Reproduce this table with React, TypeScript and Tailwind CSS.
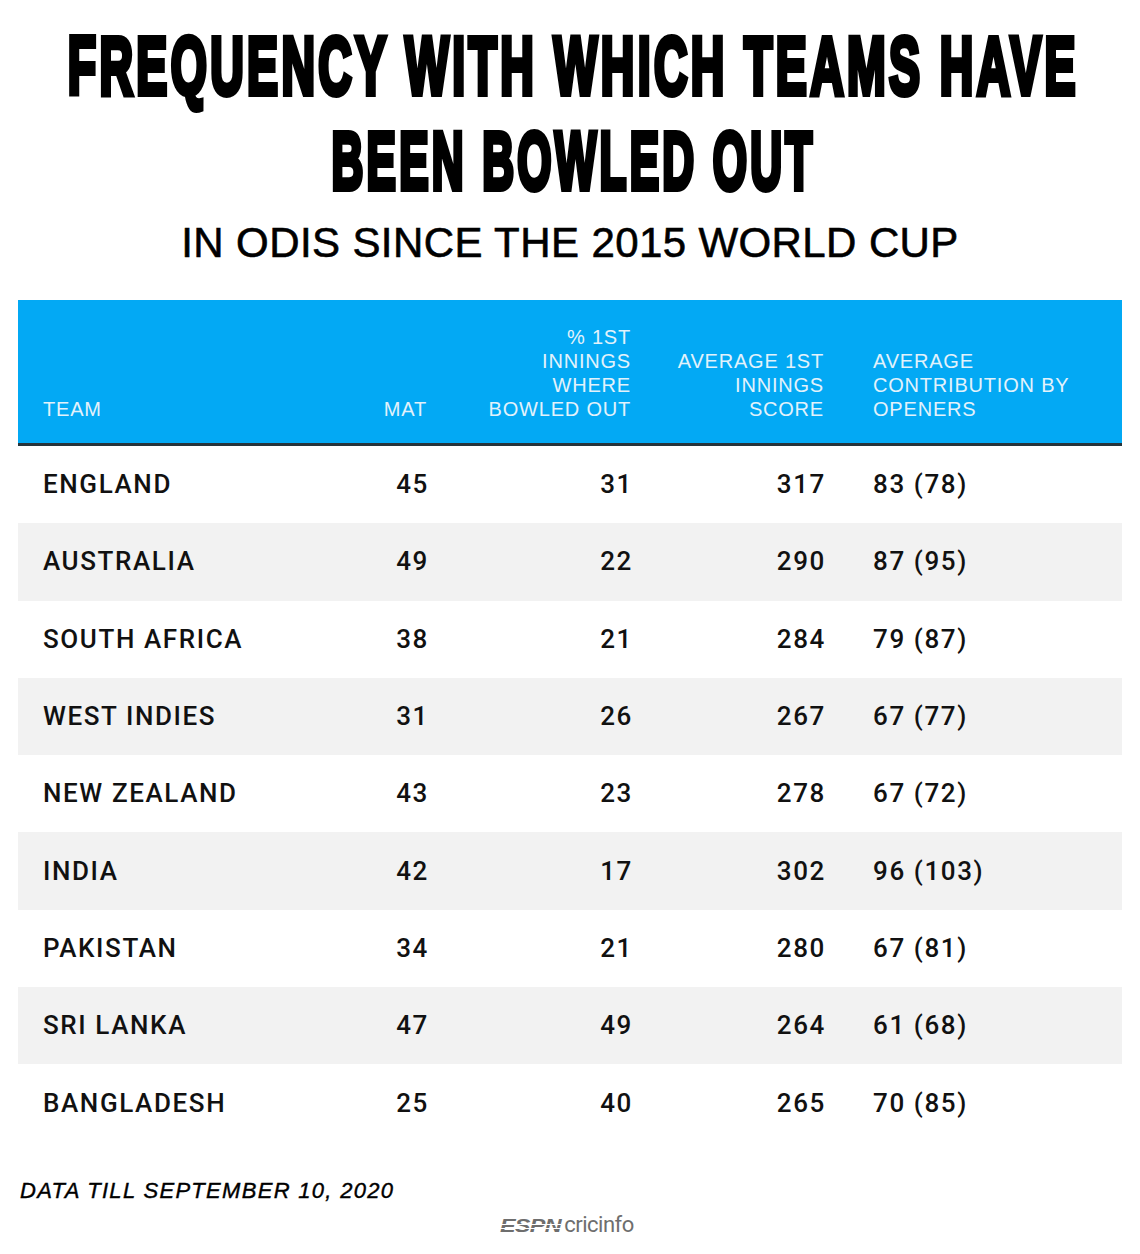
const rows = [
  { team: "ENGLAND", mat: 45, pct: 31, avg: 317, open: "83 (78)" },
  { team: "AUSTRALIA", mat: 49, pct: 22, avg: 290, open: "87 (95)" },
  { team: "SOUTH AFRICA", mat: 38, pct: 21, avg: 284, open: "79 (87)" },
  { team: "WEST INDIES", mat: 31, pct: 26, avg: 267, open: "67 (77)" },
  { team: "NEW ZEALAND", mat: 43, pct: 23, avg: 278, open: "67 (72)" },
  { team: "INDIA", mat: 42, pct: 17, avg: 302, open: "96 (103)" },
  { team: "PAKISTAN", mat: 34, pct: 21, avg: 280, open: "67 (81)" },
  { team: "SRI LANKA", mat: 47, pct: 49, avg: 264, open: "61 (68)" },
  { team: "BANGLADESH", mat: 25, pct: 40, avg: 265, open: "70 (85)" },
];

const cols = "grid grid-cols-[300px_84px_204px_193px_1fr] pl-[25px]";

function Title() {
  return (
    <div className="flex flex-col items-center overflow-hidden pt-[18px] font-['Liberation_Sans',Arial,sans-serif] text-[82px] font-bold leading-[95px] tracking-[6px] text-black [-webkit-text-stroke:6px_#000]">
      <div className="flex w-full justify-center">
        <span className="-mr-[6px] inline-block shrink-0 whitespace-nowrap scale-x-[0.566]">
          FREQUENCY WITH WHICH TEAMS HAVE
        </span>
      </div>
      <div className="flex w-full justify-center">
        <span className="-mr-[6px] inline-block shrink-0 whitespace-nowrap scale-x-[0.537]">
          BEEN BOWLED OUT
        </span>
      </div>
    </div>
  );
}

function Header() {
  return (
    <div
      className={`${cols} items-end border-b-[3px] border-[#27343b] bg-[#03a9f4] pb-[22px] pt-[25px] font-['Liberation_Sans',Arial,sans-serif] text-[20px] leading-[24px] tracking-[0.8px] text-[#e2f2fb]`}
    >
      <div>TEAM</div>
      <div className="text-right">MAT</div>
      <div className="whitespace-nowrap text-right">
        % 1ST
        <br />
        INNINGS
        <br />
        WHERE
        <br />
        BOWLED OUT
      </div>
      <div className="whitespace-nowrap text-right">
        AVERAGE 1ST
        <br />
        INNINGS
        <br />
        SCORE
      </div>
      <div className="whitespace-nowrap pl-[49px]">
        AVERAGE
        <br />
        CONTRIBUTION BY
        <br />
        OPENERS
      </div>
    </div>
  );
}

export default function App() {
  return (
    <div className="h-[1254px] w-[1140px] bg-white">
      <Title />
      <div className="mt-[11px] text-center font-['Liberation_Sans',Arial,sans-serif] text-[42px] leading-[48px] tracking-[0.4px] text-black [-webkit-text-stroke:0.6px_#000]">
        IN ODIS SINCE THE 2015 WORLD CUP
      </div>

      <div className="mx-[18px] mt-[33px]">
        <Header />
        {rows.map((r, i) => (
          <div
            key={r.team}
            className={`${cols} h-[77.3px] items-center font-['Roboto',sans-serif] text-[26px] font-medium tracking-[1.6px] text-[#111] ${
              i % 2 === 1 ? "bg-[#f2f2f2]" : "bg-white"
            }`}
          >
            <div>{r.team}</div>
            <div className="-mr-[2px] text-right">{r.mat}</div>
            <div className="-mr-[2px] text-right">{r.pct}</div>
            <div className="-mr-[2px] text-right">{r.avg}</div>
            <div className="pl-[49px]">{r.open}</div>
          </div>
        ))}
      </div>

      <div className="mt-[36px] pl-[20px] font-['Liberation_Sans',Arial,sans-serif] text-[22px] italic leading-[26px] tracking-[1.3px] text-black [-webkit-text-stroke:0.4px_#000]">
        DATA TILL SEPTEMBER 10, 2020
      </div>

      <div className="mt-[10px] flex items-end justify-center gap-[3px] pl-[8px] text-[#6e6e6e]">
        <span className="relative inline-block origin-right scale-x-[1.3] font-['Liberation_Sans',Arial,sans-serif] text-[18px] font-black italic leading-[20px] tracking-[-0.5px]">
          ESPN
          <span className="absolute left-0 right-0 top-[8px] h-px bg-white" />
          <span className="absolute left-0 right-0 top-[12px] h-px bg-white" />
        </span>
        <span className="font-['Roboto',sans-serif] text-[22px] leading-[22px] tracking-[-0.5px]">
          cricinfo
        </span>
      </div>
    </div>
  );
}
